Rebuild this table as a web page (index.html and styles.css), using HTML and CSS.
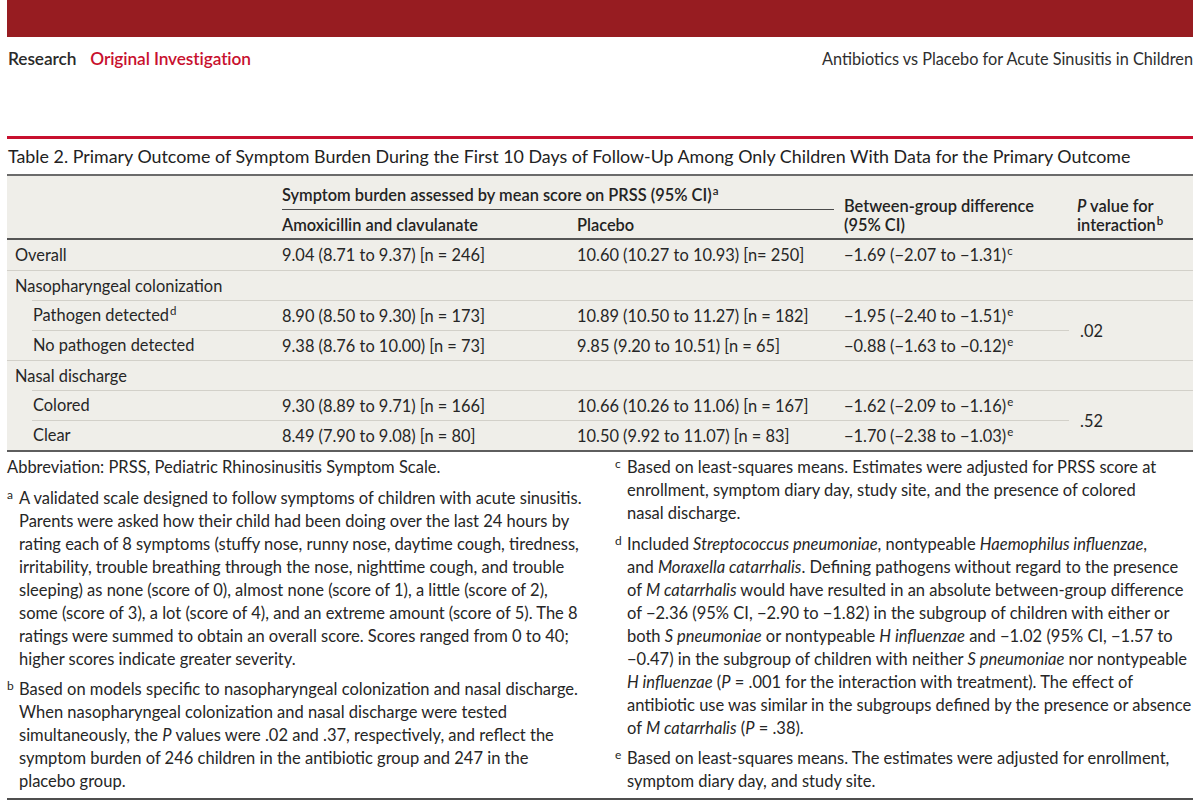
FILE: index.html
```html
<!DOCTYPE html>
<html lang="en">
<head>
<meta charset="utf-8">
<title>Table 2. Primary Outcome of Symptom Burden</title>
<link rel="stylesheet" href="styles.css">
</head>
<body>
<div class="page">
  <div class="topbar"></div>
  <header class="runhead">
    <div class="section"><span class="sec-main">Research</span><span class="sec-sub">Original Investigation</span></div>
    <div class="article">Antibiotics vs Placebo for Acute Sinusitis in Children</div>
  </header>

  <div class="figure">
    <h2 class="caption">Table 2. Primary Outcome of Symptom Burden During the First 10 Days of Follow-Up Among Only Children With Data for the Primary Outcome</h2>
    <table class="data">
      <colgroup>
        <col class="c1"><col class="c2"><col class="c3"><col class="c4"><col class="c5">
      </colgroup>
      <thead>
        <tr class="h1">
          <th rowspan="2" class="blank"></th>
          <th colspan="2" class="span"><div class="span-in">Symptom burden assessed by mean score on PRSS (95% CI)<sup>a</sup></div></th>
          <th rowspan="2" class="multi">Between-group difference<br>(95% CI)</th>
          <th rowspan="2" class="multi"><i>P</i> value for<br>interaction<sup>b</sup></th>
        </tr>
        <tr class="h2">
          <th>Amoxicillin and clavulanate</th>
          <th>Placebo</th>
        </tr>
      </thead>
      <tbody>
        <tr class="first">
          <td>Overall</td>
          <td>9.04 (8.71 to 9.37) [n = 246]</td>
          <td>10.60 (10.27 to 10.93) [n= 250]</td>
          <td>−1.69 (−2.07 to −1.31)<sup>c</sup></td>
          <td></td>
        </tr>
        <tr>
          <td>Nasopharyngeal colonization</td>
          <td></td><td></td><td></td><td></td>
        </tr>
        <tr class="sub">
          <td class="lab">Pathogen detected<sup>d</sup></td>
          <td>8.90 (8.50 to 9.30) [n = 173]</td>
          <td>10.89 (10.50 to 11.27) [n = 182]</td>
          <td>−1.95 (−2.40 to −1.51)<sup>e</sup></td>
          <td rowspan="2" class="pval">.02</td>
        </tr>
        <tr class="sub">
          <td class="lab">No pathogen detected</td>
          <td>9.38 (8.76 to 10.00) [n = 73]</td>
          <td>9.85 (9.20 to 10.51) [n = 65]</td>
          <td>−0.88 (−1.63 to −0.12)<sup>e</sup></td>
        </tr>
        <tr>
          <td>Nasal discharge</td>
          <td></td><td></td><td></td><td></td>
        </tr>
        <tr class="sub">
          <td class="lab">Colored</td>
          <td>9.30 (8.89 to 9.71) [n = 166]</td>
          <td>10.66 (10.26 to 11.06) [n = 167]</td>
          <td>−1.62 (−2.09 to −1.16)<sup>e</sup></td>
          <td rowspan="2" class="pval">.52</td>
        </tr>
        <tr class="sub">
          <td class="lab">Clear</td>
          <td>8.49 (7.90 to 9.08) [n = 80]</td>
          <td>10.50 (9.92 to 11.07) [n = 83]</td>
          <td>−1.70 (−2.38 to −1.03)<sup>e</sup></td>
        </tr>
      </tbody>
    </table>

    <div class="notes">
      <div class="note-col">
        <p class="abbr">Abbreviation: PRSS, Pediatric Rhinosinusitis Symptom Scale.</p>
        <p class="fn"><sup>a</sup>A validated scale designed to follow symptoms of children with acute sinusitis.<br>Parents were asked how their child had been doing over the last 24 hours by<br>rating each of 8 symptoms (stuffy nose, runny nose, daytime cough, tiredness,<br>irritability, trouble breathing through the nose, nighttime cough, and trouble<br>sleeping) as none (score of 0), almost none (score of 1), a little (score of 2),<br>some (score of 3), a lot (score of 4), and an extreme amount (score of 5). The 8<br>ratings were summed to obtain an overall score. Scores ranged from 0 to 40;<br>higher scores indicate greater severity.</p>
        <p class="fn"><sup>b</sup>Based on models specific to nasopharyngeal colonization and nasal discharge.<br>When nasopharyngeal colonization and nasal discharge were tested<br>simultaneously, the <i>P</i> values were .02 and .37, respectively, and reflect the<br>symptom burden of 246 children in the antibiotic group and 247 in the<br>placebo group.</p>
      </div>
      <div class="note-col">
        <p class="fn"><sup>c</sup>Based on least-squares means. Estimates were adjusted for PRSS score at<br>enrollment, symptom diary day, study site, and the presence of colored<br>nasal discharge.</p>
        <p class="fn"><sup>d</sup>Included <i>Streptococcus pneumoniae</i>, nontypeable <i>Haemophilus influenzae</i>,<br>and <i>Moraxella catarrhalis</i>. Defining pathogens without regard to the presence<br>of <i>M catarrhalis</i> would have resulted in an absolute between-group difference<br>of −2.36 (95% CI, −2.90 to −1.82) in the subgroup of children with either or<br>both <i>S pneumoniae</i> or nontypeable <i>H influenzae</i> and −1.02 (95% CI, −1.57 to<br>−0.47) in the subgroup of children with neither <i>S pneumoniae</i> nor nontypeable<br><i>H influenzae</i> (<i>P</i> = .001 for the interaction with treatment). The effect of<br>antibiotic use was similar in the subgroups defined by the presence or absence<br>of <i>M catarrhalis</i> (<i>P</i> = .38).</p>
        <p class="fn"><sup>e</sup>Based on least-squares means. The estimates were adjusted for enrollment,<br>symptom diary day, and study site.</p>
      </div>
    </div>
  </div>
</div>
</body>
</html>
```
FILE: styles.css
```css
* { box-sizing: border-box; }

html, body {
  margin: 0;
  padding: 0;
  background: #ffffff;
}

body {
  font-family: Lato, "Liberation Sans", sans-serif;
  color: #2b2b2b;
}

.page {
  width: 1200px;
  padding: 0 7px;
}

.topbar {
  height: 37px;
  background: #971c21;
}

.runhead {
  display: flex;
  justify-content: space-between;
  align-items: center;
  height: 20px;
  margin-top: 12px;
  font-size: 16.3px;
  line-height: 20px;
}

.section {
  display: flex;
  gap: 14px;
  padding-left: 1px;
  font-size: 17.3px;
}

.sec-main {
  color: #2a2a2a;
  font-weight: 600;
  letter-spacing: -0.1px;
}

.sec-sub {
  color: #c8102e;
  font-weight: 600;
  letter-spacing: -0.1px;
}

.article {
  color: #2e2e2e;
}

.figure {
  margin-top: 67px;
  border-top: 3px solid #c8102e;
}

.caption {
  margin: 0;
  padding: 6px 0 7px 1px;
  font-size: 17.85px;
  line-height: 22px;
  font-weight: 400;
  color: #222;
  white-space: nowrap;
}

.data {
  width: 1186px;
  table-layout: fixed;
  border-collapse: separate;
  border-spacing: 0;
  background: #efeee9;
  border-top: 2px solid #6b6b6b;
  border-bottom: 2px solid #5e5e5e;
  font-size: 16.4px;
  color: #262626;
}

.c1 { width: 267px; }
.c2 { width: 295px; }
.c3 { width: 267px; }
.c4 { width: 233px; }
.c5 { width: 124px; }

.data th {
  font-weight: 600;
  text-align: left;
  line-height: 19px;
  padding: 0 8px;
  vertical-align: bottom;
  color: #232323;
  white-space: nowrap;
}

.data th.span {
  padding: 9px 2px 0 8px;
  height: 33px;
}

.span-in {
  border-bottom: 1px solid #4a4a4a;
  padding-bottom: 5px;
}

.h2 th {
  height: 30px;
  padding-bottom: 4px;
  border-bottom: 2px solid #555;
}

.data th.multi,
.data th.blank {
  padding-bottom: 4px;
  border-bottom: 2px solid #555;
}

.data td {
  height: 30px;
  padding: 0 8px;
  line-height: 20px;
  white-space: nowrap;
  border-top: 1px solid #d2d0c9;
  vertical-align: middle;
}

.data tr.first td {
  border-top: 0;
  height: 30px;
}

.data tr.sub td.lab {
  border-top: 0;
  padding-left: 26px;
  background: linear-gradient(#d2d0c9, #d2d0c9) 25px 0 / calc(100% - 25px) 1px no-repeat;
}

.data td.pval {
  padding-left: 11px;
}

sup {
  font-size: 0.7em;
  line-height: 0;
  vertical-align: 0.5em;
  margin-left: 1px;
}

.notes {
  display: flex;
  gap: 26px;
  padding: 4px 0 5px;
  border-bottom: 2px solid #4f4f4f;
}

.note-col {
  flex: 0 0 582px;
}

.note-col + .note-col {
  flex: 1 1 auto;
}

.notes p {
  margin: 0;
  font-size: 16.5px;
  line-height: 23px;
  color: #262626;
  white-space: nowrap;
}

.notes p + p {
  margin-top: 7.5px;
}

.notes .fn {
  padding-left: 12px;
  text-indent: -12px;
}

.notes .fn sup {
  display: inline-block;
  width: 12px;
  text-indent: 0;
  margin-left: 0;
  font-size: 12px;
  vertical-align: 5px;
  line-height: 1;
}
```
